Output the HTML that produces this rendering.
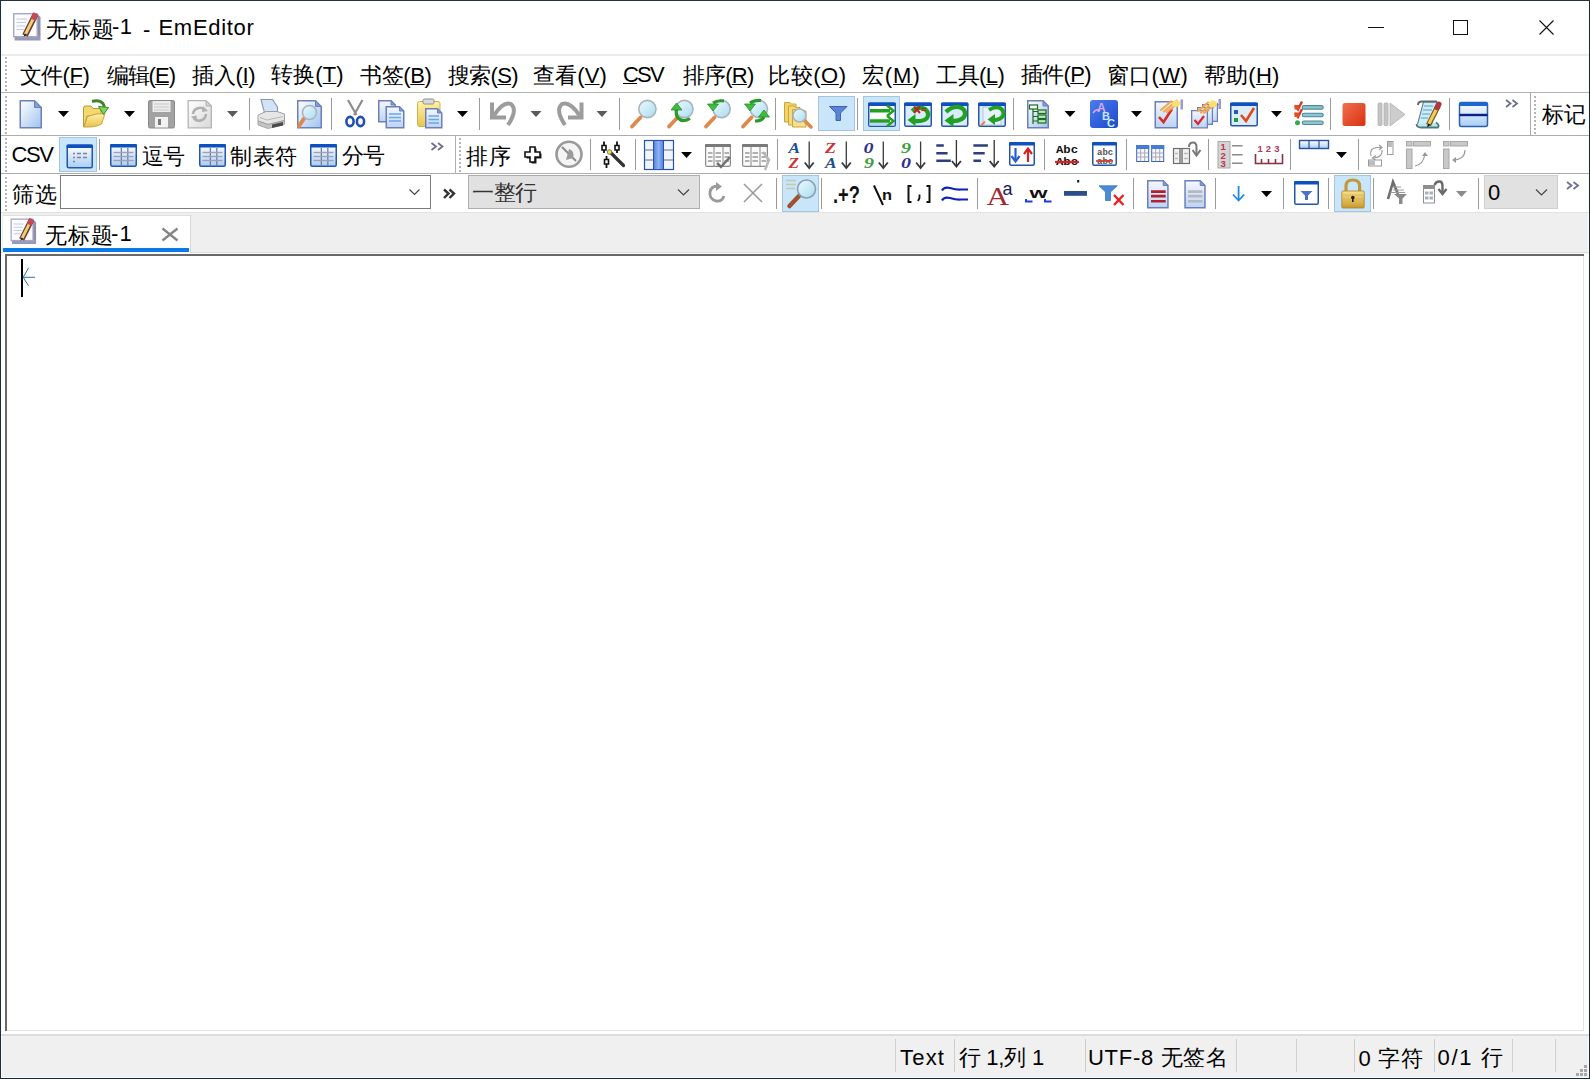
<!DOCTYPE html><html><head><meta charset="utf-8"><style>
html,body{margin:0;padding:0;}
body{width:1590px;height:1079px;position:relative;overflow:hidden;background:#fff;font-family:"Liberation Sans",sans-serif;}
body>div,body>svg{position:absolute;}
.t{white-space:nowrap;}
u{text-decoration:underline;text-underline-offset:1px;text-decoration-thickness:1px;}
</style></head><body>
<div style="left:0px;top:0px;width:1590px;height:1px;background:#27313a;"></div>
<div style="left:0px;top:0px;width:1px;height:1079px;background:#1f2f38;"></div>
<div style="left:1589px;top:0px;width:1px;height:1079px;background:#1f2a36;"></div>
<div style="left:0px;top:1078px;width:1590px;height:1px;background:#1b2836;"></div>
<div style="left:1px;top:1077px;width:1588px;height:1px;background:#f8fbff;"></div>
<div style="left:1px;top:1px;width:1px;height:1077px;background:#f6fbff;"></div>
<div style="left:1588px;top:1px;width:1px;height:1077px;background:#f8fbff;"></div>
<div style="left:1px;top:54px;width:1588px;height:2px;background:#ececec;"></div>
<div style="left:1px;top:92px;width:1588px;height:1px;background:#b3b3b3;"></div>
<div style="left:1px;top:135px;width:1588px;height:1px;background:#adadad;"></div>
<div style="left:1530px;top:93px;width:1px;height:42px;background:#a8a8a8;"></div>
<div style="left:1px;top:173px;width:1588px;height:1px;background:#adadad;"></div>
<div style="left:455px;top:136px;width:1px;height:37px;background:#b0b0b0;"></div>
<div style="left:2px;top:212px;width:1586px;height:42px;background:#efefef;"></div>
<div style="left:1px;top:212px;width:1588px;height:1px;background:#e2e2e2;"></div>
<div style="left:1px;top:252px;width:1588px;height:1px;background:#dcdcdc;"></div>
<div style="left:1px;top:253px;width:1588px;height:1px;background:#fafafa;"></div>
<div style="left:5px;top:57px;width:2px;height:2px;background:#b4b4b4;"></div>
<div style="left:5px;top:61px;width:2px;height:2px;background:#b4b4b4;"></div>
<div style="left:5px;top:65px;width:2px;height:2px;background:#b4b4b4;"></div>
<div style="left:5px;top:69px;width:2px;height:2px;background:#b4b4b4;"></div>
<div style="left:5px;top:73px;width:2px;height:2px;background:#b4b4b4;"></div>
<div style="left:5px;top:77px;width:2px;height:2px;background:#b4b4b4;"></div>
<div style="left:5px;top:81px;width:2px;height:2px;background:#b4b4b4;"></div>
<div style="left:5px;top:85px;width:2px;height:2px;background:#b4b4b4;"></div>
<div style="left:5px;top:89px;width:2px;height:2px;background:#b4b4b4;"></div>
<div style="left:5px;top:96px;width:2px;height:2px;background:#b4b4b4;"></div>
<div style="left:5px;top:100px;width:2px;height:2px;background:#b4b4b4;"></div>
<div style="left:5px;top:104px;width:2px;height:2px;background:#b4b4b4;"></div>
<div style="left:5px;top:108px;width:2px;height:2px;background:#b4b4b4;"></div>
<div style="left:5px;top:112px;width:2px;height:2px;background:#b4b4b4;"></div>
<div style="left:5px;top:116px;width:2px;height:2px;background:#b4b4b4;"></div>
<div style="left:5px;top:120px;width:2px;height:2px;background:#b4b4b4;"></div>
<div style="left:5px;top:124px;width:2px;height:2px;background:#b4b4b4;"></div>
<div style="left:5px;top:128px;width:2px;height:2px;background:#b4b4b4;"></div>
<div style="left:5px;top:132px;width:2px;height:2px;background:#b4b4b4;"></div>
<div style="left:5px;top:138px;width:2px;height:2px;background:#b4b4b4;"></div>
<div style="left:5px;top:142px;width:2px;height:2px;background:#b4b4b4;"></div>
<div style="left:5px;top:146px;width:2px;height:2px;background:#b4b4b4;"></div>
<div style="left:5px;top:150px;width:2px;height:2px;background:#b4b4b4;"></div>
<div style="left:5px;top:154px;width:2px;height:2px;background:#b4b4b4;"></div>
<div style="left:5px;top:158px;width:2px;height:2px;background:#b4b4b4;"></div>
<div style="left:5px;top:162px;width:2px;height:2px;background:#b4b4b4;"></div>
<div style="left:5px;top:166px;width:2px;height:2px;background:#b4b4b4;"></div>
<div style="left:5px;top:170px;width:2px;height:2px;background:#b4b4b4;"></div>
<div style="left:5px;top:177px;width:2px;height:2px;background:#b4b4b4;"></div>
<div style="left:5px;top:181px;width:2px;height:2px;background:#b4b4b4;"></div>
<div style="left:5px;top:185px;width:2px;height:2px;background:#b4b4b4;"></div>
<div style="left:5px;top:189px;width:2px;height:2px;background:#b4b4b4;"></div>
<div style="left:5px;top:193px;width:2px;height:2px;background:#b4b4b4;"></div>
<div style="left:5px;top:197px;width:2px;height:2px;background:#b4b4b4;"></div>
<div style="left:5px;top:201px;width:2px;height:2px;background:#b4b4b4;"></div>
<div style="left:5px;top:205px;width:2px;height:2px;background:#b4b4b4;"></div>
<div style="left:5px;top:209px;width:2px;height:2px;background:#b4b4b4;"></div>
<div style="left:1534px;top:96px;width:2px;height:2px;background:#b4b4b4;"></div>
<div style="left:1534px;top:100px;width:2px;height:2px;background:#b4b4b4;"></div>
<div style="left:1534px;top:104px;width:2px;height:2px;background:#b4b4b4;"></div>
<div style="left:1534px;top:108px;width:2px;height:2px;background:#b4b4b4;"></div>
<div style="left:1534px;top:112px;width:2px;height:2px;background:#b4b4b4;"></div>
<div style="left:1534px;top:116px;width:2px;height:2px;background:#b4b4b4;"></div>
<div style="left:1534px;top:120px;width:2px;height:2px;background:#b4b4b4;"></div>
<div style="left:1534px;top:124px;width:2px;height:2px;background:#b4b4b4;"></div>
<div style="left:1534px;top:128px;width:2px;height:2px;background:#b4b4b4;"></div>
<div style="left:1534px;top:132px;width:2px;height:2px;background:#b4b4b4;"></div>
<div style="left:459px;top:138px;width:2px;height:2px;background:#b4b4b4;"></div>
<div style="left:459px;top:142px;width:2px;height:2px;background:#b4b4b4;"></div>
<div style="left:459px;top:146px;width:2px;height:2px;background:#b4b4b4;"></div>
<div style="left:459px;top:150px;width:2px;height:2px;background:#b4b4b4;"></div>
<div style="left:459px;top:154px;width:2px;height:2px;background:#b4b4b4;"></div>
<div style="left:459px;top:158px;width:2px;height:2px;background:#b4b4b4;"></div>
<div style="left:459px;top:162px;width:2px;height:2px;background:#b4b4b4;"></div>
<div style="left:459px;top:166px;width:2px;height:2px;background:#b4b4b4;"></div>
<div style="left:459px;top:170px;width:2px;height:2px;background:#b4b4b4;"></div>
<div style="left:1368px;top:27px;width:16px;height:1px;background:#111;"></div>
<div style="left:1453px;top:20px;width:13px;height:13px;border:1px solid #111"></div>
<svg style="left:1539px;top:20px;" width="16" height="16" viewBox="0 0 16 16"><path d="M0.5 0.5L14.5 14.5M14.5 0.5L0.5 14.5" stroke="#111" stroke-width="1.1"/></svg>
<div style="left:60px;top:175px;width:369px;height:32px;border:1px solid #7a7a7a;background:#fff"></div>
<div style="left:468px;top:175px;width:230px;height:32px;border:1px solid #adadad;background:#e1e1e1"></div>
<div style="left:1484px;top:175px;width:72px;height:32px;border:1px solid #cfcfcf;background:#e1e1e1"></div>
<div style="left:3px;top:215px;width:187px;height:1px;background:#e0e0e0;"></div>
<div style="left:190px;top:215px;width:1px;height:38px;background:#d8d8d8;"></div>
<div style="left:3px;top:216px;width:187px;height:37px;background:#ffffff;"></div>
<div style="left:3px;top:248px;width:186px;height:4px;background:#0a7ae6;"></div>
<svg style="left:161px;top:227px;" width="18" height="15" viewBox="0 0 18 15"><path d="M1.5 1.5L16.5 13.5M16.5 1.5L1.5 13.5" stroke="#858585" stroke-width="2.3"/></svg>
<div style="left:5px;top:254px;width:1579px;height:777px;background:#ffffff;"></div>
<div style="left:5px;top:254px;width:1579px;height:2px;background:#696969;"></div>
<div style="left:5px;top:254px;width:2px;height:777px;background:#696969;"></div>
<div style="left:1583px;top:256px;width:1px;height:775px;background:#e3e3e3;"></div>
<div style="left:7px;top:1030px;width:1577px;height:1px;background:#e3e3e3;"></div>
<div style="left:21px;top:259px;width:2px;height:38px;background:#000;"></div>
<svg style="left:0px;top:0px;" width="40" height="300" viewBox="0 0 40 300"><path d="M28.6 267.8L23.2 277.3L28.6 285.8M23.2 277.3H35" stroke="#2f6fb8" stroke-width="1" fill="none"/></svg>
<div style="left:1px;top:1034px;width:1588px;height:2px;background:#dcdcdc;"></div>
<div style="left:2px;top:1036px;width:1586px;height:41px;background:#f0f0f0;"></div>
<div style="left:895px;top:1039px;width:1px;height:33px;background:#cfcfcf;"></div>
<div style="left:954px;top:1039px;width:1px;height:33px;background:#cfcfcf;"></div>
<div style="left:1085px;top:1039px;width:1px;height:33px;background:#cfcfcf;"></div>
<div style="left:1236px;top:1039px;width:1px;height:33px;background:#cfcfcf;"></div>
<div style="left:1296px;top:1039px;width:1px;height:33px;background:#cfcfcf;"></div>
<div style="left:1354px;top:1039px;width:1px;height:33px;background:#cfcfcf;"></div>
<div style="left:1434px;top:1039px;width:1px;height:33px;background:#cfcfcf;"></div>
<div style="left:1512px;top:1039px;width:1px;height:33px;background:#cfcfcf;"></div>
<div style="left:1555px;top:1039px;width:1px;height:33px;background:#cfcfcf;"></div>
<div style="left:1584px;top:1065px;width:3px;height:3px;background:#a8a8a8;"></div>
<div style="left:1580px;top:1069px;width:3px;height:3px;background:#a8a8a8;"></div>
<div style="left:1584px;top:1069px;width:3px;height:3px;background:#a8a8a8;"></div>
<div style="left:1576px;top:1073px;width:3px;height:3px;background:#a8a8a8;"></div>
<div style="left:1580px;top:1073px;width:3px;height:3px;background:#a8a8a8;"></div>
<div style="left:1584px;top:1073px;width:3px;height:3px;background:#a8a8a8;"></div>
<div class="t" style="left:45.50px;top:18.50px;font-size:22px;line-height:22px;letter-spacing:1.35px;color:#000">无标题</div>
<div class="t" style="left:112.00px;top:16.00px;font-size:22px;line-height:22px;letter-spacing:0.36px;color:#000">-1</div>
<div class="t" style="left:143.00px;top:19.00px;font-size:22px;line-height:22px;letter-spacing:0.00px;color:#000">-</div>
<div class="t" style="left:158.50px;top:16.50px;font-size:22px;line-height:22px;letter-spacing:0.69px;color:#000">EmEditor</div>
<div class="t" style="left:19.50px;top:65.00px;font-size:22px;line-height:22px;letter-spacing:-0.45px;color:#000">文件(<u>F</u>)</div>
<div class="t" style="left:106.50px;top:65.00px;font-size:22px;line-height:22px;letter-spacing:-0.95px;color:#000">编辑(<u>E</u>)</div>
<div class="t" style="left:192.00px;top:65.00px;font-size:22px;line-height:22px;letter-spacing:-0.31px;color:#000">插入(<u>I</u>)</div>
<div class="t" style="left:271.00px;top:64.00px;font-size:22px;line-height:22px;letter-spacing:0.13px;color:#000">转换(<u>T</u>)</div>
<div class="t" style="left:360.00px;top:65.00px;font-size:22px;line-height:22px;letter-spacing:-0.36px;color:#000">书签(<u>B</u>)</div>
<div class="t" style="left:448.00px;top:65.00px;font-size:22px;line-height:22px;letter-spacing:-0.72px;color:#000">搜索(<u>S</u>)</div>
<div class="t" style="left:533.00px;top:65.00px;font-size:22px;line-height:22px;letter-spacing:0.13px;color:#000">查看(<u>V</u>)</div>
<div class="t" style="left:623.00px;top:63.50px;font-size:22px;line-height:22px;letter-spacing:-1.80px;color:#000"><u>C</u>SV</div>
<div class="t" style="left:682.50px;top:65.00px;font-size:22px;line-height:22px;letter-spacing:-0.68px;color:#000">排序(<u>R</u>)</div>
<div class="t" style="left:768.00px;top:65.00px;font-size:22px;line-height:22px;letter-spacing:0.58px;color:#000">比较(<u>O</u>)</div>
<div class="t" style="left:861.50px;top:65.00px;font-size:22px;line-height:22px;letter-spacing:1.14px;color:#000">宏(<u>M</u>)</div>
<div class="t" style="left:936.00px;top:65.00px;font-size:22px;line-height:22px;letter-spacing:-0.50px;color:#000">工具(<u>L</u>)</div>
<div class="t" style="left:1021.00px;top:64.00px;font-size:22px;line-height:22px;letter-spacing:-0.72px;color:#000">插件(<u>P</u>)</div>
<div class="t" style="left:1106.50px;top:65.00px;font-size:22px;line-height:22px;letter-spacing:0.45px;color:#000">窗口(<u>W</u>)</div>
<div class="t" style="left:1204.00px;top:65.00px;font-size:22px;line-height:22px;letter-spacing:0.18px;color:#000">帮助(<u>H</u>)</div>
<div class="t" style="left:11.50px;top:144.00px;font-size:22px;line-height:22px;letter-spacing:-1.35px;color:#000">CSV</div>
<div class="t" style="left:141.50px;top:146.00px;font-size:22px;line-height:22px;letter-spacing:-0.18px;color:#000">逗号</div>
<div class="t" style="left:230.00px;top:146.00px;font-size:22px;line-height:22px;letter-spacing:0.72px;color:#000">制表符</div>
<div class="t" style="left:341.50px;top:145.00px;font-size:22px;line-height:22px;letter-spacing:-0.36px;color:#000">分号</div>
<div class="t" style="left:466.00px;top:146.00px;font-size:22px;line-height:22px;letter-spacing:0.54px;color:#000">排序</div>
<div class="t" style="left:11.50px;top:184.00px;font-size:22px;line-height:22px;letter-spacing:1.08px;color:#000">筛选</div>
<div class="t" style="left:472.00px;top:182.00px;font-size:22px;line-height:22px;letter-spacing:-0.27px;color:#333">一整行</div>
<div class="t" style="left:1488.00px;top:182.00px;font-size:22px;line-height:22px;letter-spacing:0.00px;color:#000">0</div>
<div class="t" style="left:1541.50px;top:104.00px;font-size:22px;line-height:22px;letter-spacing:0.00px;color:#000">标记</div>
<div class="t" style="left:44.50px;top:225.00px;font-size:22px;line-height:22px;letter-spacing:1.26px;color:#000">无标题</div>
<div class="t" style="left:111.00px;top:223.00px;font-size:22px;line-height:22px;letter-spacing:1.26px;color:#000">-1</div>
<div class="t" style="left:900.00px;top:1047.00px;font-size:22px;line-height:22px;letter-spacing:1.20px;color:#000">Text</div>
<div class="t" style="left:958.50px;top:1047.25px;font-size:22px;line-height:22px;letter-spacing:-0.18px;color:#000">行 1,列 1</div>
<div class="t" style="left:1088.00px;top:1047.25px;font-size:22px;line-height:22px;letter-spacing:0.72px;color:#000">UTF-8 无签名</div>
<div class="t" style="left:1358.50px;top:1048.25px;font-size:22px;line-height:22px;letter-spacing:0.78px;color:#000">0 字符</div>
<div class="t" style="left:1437.50px;top:1047.25px;font-size:22px;line-height:22px;letter-spacing:1.71px;color:#000">0/1 行</div>
<svg style="left:0;top:0;position:absolute" width="1590" height="1079" viewBox="0 0 1590 1079"><defs>
<linearGradient id="gdoc" x1="0" y1="0" x2="1" y2="1"><stop offset="0" stop-color="#ffffff"/><stop offset="1" stop-color="#9fc3f0"/></linearGradient>
<linearGradient id="gdoc2" x1="0" y1="0" x2="0" y2="1"><stop offset="0" stop-color="#f4f8ff"/><stop offset="1" stop-color="#bcd3f3"/></linearGradient>
<linearGradient id="gfr" x1="0" y1="0" x2="0" y2="1"><stop offset="0" stop-color="#ffffff"/><stop offset="1" stop-color="#a9cdf5"/></linearGradient>
<linearGradient id="gfold" x1="0" y1="0" x2="0" y2="1"><stop offset="0" stop-color="#fff1a8"/><stop offset="1" stop-color="#e9c44c"/></linearGradient>
<linearGradient id="ggray" x1="0" y1="0" x2="1" y2="1"><stop offset="0" stop-color="#ffffff"/><stop offset="1" stop-color="#d8d8d8"/></linearGradient>
<linearGradient id="glens" x1="0" y1="0" x2="1" y2="1"><stop offset="0" stop-color="#eefaff"/><stop offset="1" stop-color="#a8dcf0"/></linearGradient>
<linearGradient id="gred" x1="0" y1="0" x2="1" y2="1"><stop offset="0" stop-color="#f07050"/><stop offset="1" stop-color="#d83010"/></linearGradient>
<linearGradient id="ggold" x1="0" y1="0" x2="0" y2="1"><stop offset="0" stop-color="#f8e08a"/><stop offset="1" stop-color="#c89a30"/></linearGradient>
<linearGradient id="gabc" x1="0" y1="0" x2="1" y2="1"><stop offset="0" stop-color="#4a7cf0"/><stop offset="1" stop-color="#1e48c8"/></linearGradient>
<linearGradient id="gcol" x1="0" y1="0" x2="1" y2="0"><stop offset="0" stop-color="#4f80e0"/><stop offset="0.5" stop-color="#8fb4f4"/><stop offset="1" stop-color="#4f80e0"/></linearGradient>
<linearGradient id="gbtn" x1="0" y1="0" x2="0" y2="1"><stop offset="0" stop-color="#d4e9fb"/><stop offset="1" stop-color="#c6e1f8"/></linearGradient>
</defs><rect x="249" y="98" width="1" height="32" fill="#9a9a9a"/><rect x="331" y="98" width="1" height="32" fill="#9a9a9a"/><rect x="479" y="98" width="1" height="32" fill="#9a9a9a"/><rect x="619" y="98" width="1" height="32" fill="#9a9a9a"/><rect x="775" y="98" width="1" height="32" fill="#9a9a9a"/><rect x="857" y="98" width="1" height="32" fill="#9a9a9a"/><rect x="1013" y="98" width="1" height="32" fill="#9a9a9a"/><rect x="1330" y="98" width="1" height="32" fill="#9a9a9a"/><rect x="1449" y="98" width="1" height="32" fill="#9a9a9a"/><path d="M20.25 100.75H34.5L41.25 107.5V127.75H20.25Z" fill="url(#gdoc)" stroke="#6c7fb8" stroke-width="1.5"/><path d="M34.5 100.75V107.5H41.25Z" fill="#7f9fd8" stroke="#6c7fb8" stroke-width="1"/><path d="M58 111H69L63.5 117Z" fill="#000"/><path d="M83.5 127V108Q83.5 106 85.5 106H91L93 108.5H101V116H87L84 127Z" fill="#f3d870" stroke="#b89838" stroke-width="1"/><path d="M84 127L87.5 116.5Q96 113 105 113.5L101.5 124Q96 127.5 84 127Z" fill="url(#gfold)" stroke="#c9a53a" stroke-width="1"/><path d="M92 101.5Q99 99.5 103 103.5L104.5 107" stroke="#3a8a2a" stroke-width="3" fill="none"/><path d="M98.5 106.5L108.5 107.5L103.5 114.5Z" fill="#7ad85a" stroke="#3a8a2a" stroke-width="1"/><path d="M124 111H135L129.5 117Z" fill="#000"/><rect x="148.5" y="100.5" width="26" height="27.5" rx="1.5" fill="#a2a2a2" stroke="#8a8a8a" stroke-width="1"/><rect x="152.5" y="101" width="18" height="11" fill="#ececec"/><path d="M154 104H169M154 107H169M154 110H169" stroke="#c8c8c8" stroke-width="1"/><rect x="155" y="117" width="13" height="10.5" fill="#f2f2f2"/><rect x="158" y="119" width="3" height="6" fill="#7a7a7a"/><path d="M188.15 100.65H206L211.35 106V127.85H188.15Z" fill="url(#ggray)" stroke="#b4b4b4" stroke-width="1.3"/><path d="M206 100.65V106H211.35Z" fill="#d0d0d0" stroke="#b4b4b4" stroke-width="1"/><path d="M193 114A7 7 0 0 1 205 110" fill="none" stroke="#b0b0b0" stroke-width="2.6"/><path d="M206 114A7 7 0 0 1 194 118.5" fill="none" stroke="#b0b0b0" stroke-width="2.6"/><path d="M203 106L208 111L202 112Z M196 121.5L191 116.5L197 115.5Z" fill="#b0b0b0"/><path d="M227 111H238L232.5 117Z" fill="#5a5a5a"/><path d="M261 99.5H272.5L277.5 107V113H264.5Z" fill="#d2e3f8" stroke="#8a92b4" stroke-width="1.1"/><path d="M258 115L266 111.5H277L284.5 114V120.5L268 124.5L258 121Z" fill="#e6e6e6" stroke="#a0a0a0" stroke-width="1"/><path d="M258 121L268 124.5L284.5 120.5V124.5L268 128.5L258 125Z" fill="#c4c4c4" stroke="#9a9a9a" stroke-width="0.8"/><path d="M272 124.5L283 122V125.5L272 128Z" fill="#4a4a4a"/><path d="M260 117.5L267 120L283 116.5" stroke="#b8b8b8" stroke-width="1" fill="none"/><path d="M297.75 100.75H315.5L321.25 106.5V127.75H297.75Z" fill="url(#gdoc)" stroke="#6c7fb8" stroke-width="1.5"/><path d="M315.5 100.75V106.5H321.25Z" fill="#7f9fd8" stroke="#6c7fb8" stroke-width="1"/><path d="M304 118.5L299 126" stroke="#e0874a" stroke-width="4" stroke-linecap="round"/><circle cx="309.5" cy="112.5" r="7" fill="url(#glens)" stroke="#a9b4bf" stroke-width="1.6"/><path d="M348 100L356.5 115M362.5 100L354 115" stroke="#8d8d8d" stroke-width="2.2"/><ellipse cx="350" cy="121.5" rx="3.6" ry="4.6" fill="none" stroke="#1f4fb0" stroke-width="2.6"/><ellipse cx="360.5" cy="121.5" rx="3.6" ry="4.6" fill="none" stroke="#1f4fb0" stroke-width="2.6"/><path d="M378.75 100.75H391L395.25 105V121.75H378.75Z" fill="url(#gdoc2)" stroke="#6c7fb8" stroke-width="1.5"/><path d="M391 100.75V105H395.25Z" fill="#7f9fd8" stroke="#6c7fb8" stroke-width="1"/><path d="M386.25 106.75H399.5L403.75 111V127.75H386.25Z" fill="url(#gdoc2)" stroke="#6c7fb8" stroke-width="1.5"/><path d="M399.5 106.75V111H403.75Z" fill="#7f9fd8" stroke="#6c7fb8" stroke-width="1"/><path d="M389 114H401M389 117.5H401M389 121H401" stroke="#6aa7e8" stroke-width="1.6"/><rect x="417.5" y="101.5" width="22.5" height="25" rx="2" fill="url(#gfold)" stroke="#c9b255" stroke-width="1"/><rect x="423" y="99" width="11" height="5" rx="1.5" fill="#d9d9d9" stroke="#8e8e8e" stroke-width="1"/><path d="M425.75 108.75H437.5L441.75 113V127.75H425.75Z" fill="url(#gdoc2)" stroke="#6c7fb8" stroke-width="1.5"/><path d="M437.5 108.75V113H441.75Z" fill="#7f9fd8" stroke="#6c7fb8" stroke-width="1"/><path d="M428.5 116H439M428.5 119.5H439M428.5 123H439" stroke="#6aa7e8" stroke-width="1.6"/><path d="M457 111H468L462.5 117Z" fill="#000"/><path d="M492 102.5V117.5H506" fill="none" stroke="#9c9c9c" stroke-width="4"/><path d="M494 115.5Q503 101 511 104Q518 110 508 125" fill="none" stroke="#9c9c9c" stroke-width="4"/><path d="M530.5 111H541.5L536.0 117Z" fill="#5a5a5a"/><path d="M581.5 102.5V117.5H568" fill="none" stroke="#9c9c9c" stroke-width="4"/><path d="M579.5 115.5Q570 101 562 104Q555 110 565 125" fill="none" stroke="#9c9c9c" stroke-width="4"/><path d="M596.5 111H607.5L602.0 117Z" fill="#5a5a5a"/><path d="M640.5 117.5L632 126.5" stroke="#e0874a" stroke-width="3.8" stroke-linecap="round"/><circle cx="647.4" cy="109" r="8.6" fill="url(#glens)" stroke="#a9b4bf" stroke-width="1.6"/><path d="M677.5 117.5L669 126.5" stroke="#e0874a" stroke-width="3.8" stroke-linecap="round"/><circle cx="684.4" cy="109" r="8.6" fill="url(#glens)" stroke="#a9b4bf" stroke-width="1.6"/><path d="M677 108Q675 114 678 118Q683 123 690 118.5" stroke="#2a9a2a" stroke-width="3.2" fill="none"/><path d="M671 110L682 110L676.5 103Z" fill="#3cc03c" stroke="#2a8a2a" stroke-width="0.8"/><path d="M714.5 117.5L706 126.5" stroke="#e0874a" stroke-width="3.8" stroke-linecap="round"/><circle cx="721.6" cy="109" r="8.6" fill="url(#glens)" stroke="#a9b4bf" stroke-width="1.6"/><path d="M713 103Q717 100 724 101" stroke="#2a9a2a" stroke-width="3.2" fill="none"/><path d="M707.5 104L718.5 104L713 111Z" fill="#3cc03c" stroke="#2a8a2a" stroke-width="0.8"/><path d="M751.5 117.5L743 126.5" stroke="#e0874a" stroke-width="3.8" stroke-linecap="round"/><circle cx="758.9" cy="109" r="8.6" fill="url(#glens)" stroke="#a9b4bf" stroke-width="1.6"/><path d="M750 103Q754 100 761 100.5" stroke="#2a9a2a" stroke-width="3.2" fill="none"/><path d="M744.5 104L755.5 104L750 111Z" fill="#3cc03c" stroke="#2a8a2a" stroke-width="0.8"/><path d="M764 117Q762 121 755 121" stroke="#2a9a2a" stroke-width="3.2" fill="none"/><path d="M758.5 117L769.5 117L764 110Z" fill="#3cc03c" stroke="#2a8a2a" stroke-width="0.8"/><path d="M784.5 102.5H790L791.5 104H796V122H784.5Z" fill="#f0d36a" stroke="#c9a53a" stroke-width="1"/><path d="M788.5 106H794L795.5 107.5H800V125H788.5Z" fill="#f3da7a" stroke="#c9a53a" stroke-width="1"/><path d="M792.5 109.5H798L799.5 111H806V127H792.5Z" fill="#f6e08a" stroke="#c9a53a" stroke-width="1"/><path d="M804 120L811 127" stroke="#e0874a" stroke-width="3.5" stroke-linecap="round"/><circle cx="799.5" cy="115.5" r="6.5" fill="url(#glens)" stroke="#a9b4bf" stroke-width="1.6"/><rect x="818.5" y="96.5" width="36" height="34" fill="#c9e5f9" stroke="#a3c6de" stroke-width="1"/><path d="M829.5 106.5H847L840.5 113V120.5H836V113Z" fill="#5c84d6" stroke="#3f63b0" stroke-width="1"/><rect x="863.5" y="96.5" width="36" height="34" fill="#c9e5f9" stroke="#a3c6de" stroke-width="1"/><rect x="868.75" y="103.25" width="26.5" height="23.0" rx="1.5" fill="#ffffff" stroke="#2456a8" stroke-width="1.5"/><rect x="868" y="102.5" width="28" height="3.5" rx="1.2" fill="#0f50c0"/><rect x="869.5" y="123" width="25" height="2.5" fill="#b8d8f8"/><path d="M870 110.8H890M870 121H890" stroke="#22a022" stroke-width="3.6"/><path d="M887 105.5L893.5 110.8L887 116M887 115.7L893.5 121L887 126.3" stroke="#22a022" stroke-width="2.4" fill="none"/><rect x="904.75" y="103.25" width="26.5" height="23.0" rx="1.5" fill="#d9ecfb" stroke="#2456a8" stroke-width="1.5"/><rect x="904" y="102.5" width="28" height="3.5" rx="1.2" fill="#0f50c0"/><path d="M912 111Q918 106 925 109Q930 113 927 118Q923 122 914 121" fill="none" stroke="#22a022" stroke-width="4.2"/><path d="M907.5 120L915.5 114V126Z" fill="#22a022"/><path d="M914 106.5L920 113M920 106.5L914 113" stroke="#c02020" stroke-width="2"/><path d="M921.5 108.5H926M921.5 110.5H926" stroke="#c02020" stroke-width="1"/><rect x="941.75" y="103.25" width="26.0" height="23.0" rx="1.5" fill="#d9ecfb" stroke="#2456a8" stroke-width="1.5"/><rect x="941" y="102.5" width="27.5" height="3.5" rx="1.2" fill="#0f50c0"/><path d="M946 112Q952 106 959 107Q966 109 965 115Q963 121 953 121" fill="none" stroke="#22a022" stroke-width="4.4"/><path d="M944.5 120.5L953.5 114V127Z" fill="#22a022"/><rect x="978.75" y="103.25" width="26.5" height="23.0" rx="1.5" fill="#d9ecfb" stroke="#2456a8" stroke-width="1.5"/><rect x="978" y="102.5" width="28" height="3.5" rx="1.2" fill="#0f50c0"/><rect x="983" y="107" width="18" height="18" fill="#e8f2fc" stroke="#a8bcd8" stroke-width="0.8"/><path d="M989 110Q995 106 1000 108Q1005 111 1003 116Q1000 120 994 120" fill="none" stroke="#22a022" stroke-width="3.8"/><path d="M987.5 119.5L995 114V125Z" fill="#22a022"/><path d="M981 125.5L985 121.5" stroke="#e0874a" stroke-width="2"/><path d="M1027.75 100.75H1043L1048.25 106V127.75H1027.75Z" fill="url(#gdoc)" stroke="#6c7fb8" stroke-width="1.5"/><path d="M1043 100.75V106H1048.25Z" fill="#7f9fd8" stroke="#6c7fb8" stroke-width="1"/><rect x="1029.5" y="105" width="8" height="4" fill="#fff" stroke="#1c6a1c" stroke-width="1.2"/><path d="M1033 109V124M1033 111.5H1038M1033 116.5H1038M1033 121H1038" stroke="#1c6a1c" stroke-width="1.2"/><rect x="1038" y="110" width="8" height="3.5" fill="#bfe8bf" stroke="#1c6a1c" stroke-width="1.2"/><rect x="1038" y="115" width="8" height="3.5" fill="#bfe8bf" stroke="#1c6a1c" stroke-width="1.2"/><rect x="1038" y="119.5" width="8" height="3.5" fill="#bfe8bf" stroke="#1c6a1c" stroke-width="1.2"/><path d="M1064.5 111H1075.5L1070.0 117Z" fill="#000"/><rect x="1090" y="100" width="28" height="28" rx="3" fill="url(#gabc)"/><text x="1097" y="112" font-family="Liberation Sans" font-size="12" fill="#d8a8e8" font-weight="bold">A</text><text x="1102" y="120" font-family="Liberation Sans" font-size="11" fill="#c8e4ff" font-weight="bold">B</text><text x="1107" y="127" font-family="Liberation Sans" font-size="11" fill="#c8f0ff" font-weight="bold">C</text><path d="M1093 113Q1096 108 1100 111" stroke="#e0a8e0" stroke-width="1.5" fill="none"/><path d="M1131 111H1142L1136.5 117Z" fill="#000"/><path d="M1155.25 101.75H1178L1177.25 101V127.75H1155.25Z" fill="url(#gdoc2)" stroke="#6c7fb8" stroke-width="1.5"/><path d="M1178 101.75V101H1177.25Z" fill="#7f9fd8" stroke="#6c7fb8" stroke-width="1"/><path d="M1159 117L1163.5 122L1172 109" stroke="#d82a2a" stroke-width="2.6" fill="none"/><path d="M1161 110L1171 101.5M1164 111.5L1174 103M1167 112L1177 104" stroke="#f0a850" stroke-width="2.2" stroke-linecap="round"/><ellipse cx="1176" cy="103.5" rx="4" ry="3.5" fill="#f8e070"/><rect x="1180.5" y="99.5" width="2.5" height="10" fill="#9a9ad0"/><path d="M1202.6 104.6H1218L1217.4 104V121.4H1202.6Z" fill="url(#gdoc2)" stroke="#6c7fb8" stroke-width="1.2"/><path d="M1218 104.6V104H1217.4Z" fill="#7f9fd8" stroke="#6c7fb8" stroke-width="1"/><path d="M1197.6 107.6H1213L1212.4 107V124.4H1197.6Z" fill="url(#gdoc2)" stroke="#6c7fb8" stroke-width="1.2"/><path d="M1213 107.6V107H1212.4Z" fill="#7f9fd8" stroke="#6c7fb8" stroke-width="1"/><path d="M1191.65 110.65H1208L1207.35 110V127.85H1191.65Z" fill="url(#gdoc2)" stroke="#6c7fb8" stroke-width="1.3"/><path d="M1208 110.65V110H1207.35Z" fill="#7f9fd8" stroke="#6c7fb8" stroke-width="1"/><path d="M1194.5 120L1198 124L1204 116" stroke="#d82a2a" stroke-width="2.2" fill="none"/><path d="M1198 111L1208 102.5M1201 112.5L1211 104M1204 113L1214 105" stroke="#f0a850" stroke-width="2.2" stroke-linecap="round"/><ellipse cx="1213" cy="104" rx="4" ry="3.5" fill="#f8e070"/><rect x="1218.5" y="99" width="2.5" height="10" fill="#9a9ad0"/><rect x="1230.75" y="103.25" width="26.5" height="22.5" rx="1.5" fill="#dcecfa" stroke="#2456a8" stroke-width="1.5"/><rect x="1230" y="102.5" width="28" height="3.5" rx="1.2" fill="#0f50c0"/><rect x="1234" y="110" width="4" height="4" fill="#1c5cc8"/><rect x="1234" y="118" width="4" height="4" fill="#1c9a3c"/><path d="M1241 115L1246 121L1254 108" stroke="#e04a1a" stroke-width="2.6" fill="none"/><path d="M1271 111H1282L1276.5 117Z" fill="#000"/><path d="M1304 107.4H1321.5M1304 115H1321.5M1304 122.8H1321.5" stroke="#4f8a98" stroke-width="4.6" stroke-linecap="round"/><path d="M1304 107.4H1321.5M1304 115H1321.5M1304 122.8H1321.5" stroke="#8cc8d4" stroke-width="2.4" stroke-linecap="round"/><path d="M1295 105.5L1298 109.5L1302 101.5M1295 113L1298 117L1302 109" stroke="#d83a2a" stroke-width="2.4" fill="none"/><rect x="1294.5" y="105" width="4.5" height="4.5" fill="#e05020"/><rect x="1294.5" y="112.5" width="4.5" height="4.5" fill="#e05020"/><circle cx="1297.5" cy="122.8" r="2.5" fill="#3aa84a"/><rect x="1342.5" y="103" width="23" height="23" rx="2.5" fill="url(#gred)"/><rect x="1378" y="103" width="4" height="22.5" rx="1" fill="#c4c4c4" stroke="#b0b0b0" stroke-width="0.8"/><rect x="1384" y="103" width="4" height="22.5" rx="1" fill="#c4c4c4" stroke="#b0b0b0" stroke-width="0.8"/><path d="M1390 103L1405 114.5L1390 126Z" fill="#cdcdcd" stroke="#b0b0b0" stroke-width="0.8"/><path d="M1423.5 102H1437L1431 126H1417Z" fill="#cdeef8" stroke="#5f7f88" stroke-width="1.1"/><path d="M1418 105Q1418 101 1423 101.5H1437" stroke="#5a6a70" stroke-width="2" fill="none"/><path d="M1416.5 124Q1417 128 1422 127.5H1438Q1440 125 1436 122.5" stroke="#4a7a80" stroke-width="1.8" fill="#bfe6ef"/><path d="M1424 106H1433M1423 110H1432M1422 114H1430M1421 118H1428" stroke="#80b8d8" stroke-width="1.3"/><path d="M1428.5 125L1438 106" stroke="#7a5a20" stroke-width="5.5"/><path d="M1428.8 124L1437.8 106.5" stroke="#f2cf58" stroke-width="3"/><path d="M1437.2 107.5L1438.8 104.3" stroke="#b03840" stroke-width="5.5" stroke-linecap="round"/><path d="M1427 127.5L1428 123.5L1430.5 124.8Z" fill="#111"/><rect x="1459.5" y="102.5" width="28" height="24" rx="2" fill="url(#gfr)" stroke="#2b5fb0" stroke-width="1.5"/><rect x="1459" y="102.3" width="29" height="3.8" rx="1.5" fill="#1a68d0"/><rect x="1459.5" y="113.8" width="28" height="2.4" fill="#0c1e8a"/><path d="M1506 100L1510.5 103.5L1506 107M1512.5 100L1517 103.5L1512.5 107" stroke="#6e6e8e" stroke-width="1.8" fill="none"/><rect x="99" y="139" width="1" height="31" fill="#9a9a9a"/><rect x="590" y="139" width="1" height="31" fill="#9a9a9a"/><rect x="635" y="139" width="1" height="31" fill="#9a9a9a"/><rect x="777" y="139" width="1" height="31" fill="#9a9a9a"/><rect x="1044" y="139" width="1" height="31" fill="#9a9a9a"/><rect x="1126" y="139" width="1" height="31" fill="#9a9a9a"/><rect x="1208" y="139" width="1" height="31" fill="#9a9a9a"/><rect x="1290" y="139" width="1" height="31" fill="#9a9a9a"/><rect x="1358" y="139" width="1" height="31" fill="#9a9a9a"/><rect x="59.5" y="137.5" width="37" height="34" fill="#c9e5f9" stroke="#a3c6de" stroke-width="1"/><rect x="67.25" y="145.25" width="25.0" height="22.5" rx="1.5" fill="url(#gfr)" stroke="#2456a8" stroke-width="1.5"/><rect x="66.5" y="144.5" width="26.5" height="3.5" rx="1.2" fill="#0f50c0"/><path d="M73 153.5H75M77 153.5H81M83 153.5H87M73 157.5H75M77 157.5H81M83 157.5H87M73 161.5H75" stroke="#8080a0" stroke-width="1.6"/><rect x="110.75" y="144.75" width="25.5" height="21.5" rx="1.5" fill="url(#gfr)" stroke="#2456a8" stroke-width="1.5"/><rect x="110" y="144" width="27" height="3.5" rx="1.2" fill="#0f50c0"/><path d="M121.34 148V165.5M127.82 148V165.5" stroke="#6a7a9a" stroke-width="1.2"/><path d="M113.5 152.5H133.5" stroke="#a0a0b8" stroke-width="1.4"/><path d="M113.5 156.5H133.5" stroke="#a0a0b8" stroke-width="1.4"/><path d="M113.5 160.5H133.5" stroke="#a0a0b8" stroke-width="1.4"/><rect x="199.75" y="144.75" width="25.5" height="21.5" rx="1.5" fill="url(#gfr)" stroke="#2456a8" stroke-width="1.5"/><rect x="199" y="144" width="27" height="3.5" rx="1.2" fill="#0f50c0"/><path d="M210.34 148V165.5M216.82 148V165.5" stroke="#6a7a9a" stroke-width="1.2"/><path d="M202.5 152.5H222.5" stroke="#a0a0b8" stroke-width="1.4"/><path d="M202.5 156.5H222.5" stroke="#a0a0b8" stroke-width="1.4"/><path d="M202.5 160.5H222.5" stroke="#a0a0b8" stroke-width="1.4"/><rect x="310.75" y="144.75" width="25.5" height="21.5" rx="1.5" fill="url(#gfr)" stroke="#2456a8" stroke-width="1.5"/><rect x="310" y="144" width="27" height="3.5" rx="1.2" fill="#0f50c0"/><path d="M321.34 148V165.5M327.82 148V165.5" stroke="#6a7a9a" stroke-width="1.2"/><path d="M313.5 152.5H333.5" stroke="#a0a0b8" stroke-width="1.4"/><path d="M313.5 156.5H333.5" stroke="#a0a0b8" stroke-width="1.4"/><path d="M313.5 160.5H333.5" stroke="#a0a0b8" stroke-width="1.4"/><path d="M431.5 143L436 146.5L431.5 150M438 143L442.5 146.5L438 150" stroke="#6e6e8e" stroke-width="1.8" fill="none"/><path d="M530 147H535V152H540V157H535V162H530V157H525V152H530Z" fill="#222" transform="translate(1.5,1.5)"/><path d="M530 147H535V152H540V157H535V162H530V157H525V152H530Z" fill="#fff" stroke="#111" stroke-width="1.6"/><circle cx="569" cy="154.3" r="12.5" fill="#f4f4f4" stroke="#9a9a9a" stroke-width="2.6"/><path d="M562 147L576 161" stroke="#8a8a8a" stroke-width="2"/><path d="M569 149Q575 151 573 158L566 160Z" fill="#9a9a9a"/><path d="M604 141.5V153M617 141.5V153M606.5 156V168" stroke="#111" stroke-width="1.8"/><path d="M602 145.5H606V150H602Z M615 145.5H619V150H615Z M604.5 159.5H608.5V164H604.5Z" fill="#fff" stroke="#111" stroke-width="1.6"/><path d="M609.5 151.5L623.5 165.5" stroke="#333" stroke-width="3.2" stroke-linecap="round"/><circle cx="609.5" cy="152" r="2.3" fill="#f0e040" stroke="#666" stroke-width="0.8"/><rect x="644.5" y="140.5" width="29" height="29" fill="#eef5ff" stroke="#2a50a8" stroke-width="1.2"/><rect x="653.5" y="141" width="10" height="28" fill="url(#gcol)"/><path d="M653.5 141V169M663.5 141V169" stroke="#2a50a8" stroke-width="1"/><path d="M645 150H653M664 150H673M645 160H653M664 160H673" stroke="#9a9a9a" stroke-width="1.4"/><path d="M681 152H692L686.5 158Z" fill="#000"/><rect x="705.6" y="144.6" width="24.8" height="21.8" rx="1.5" fill="#fafafa" stroke="#8a8a8a" stroke-width="1.2"/><rect x="705" y="144" width="26" height="3" rx="1" fill="#7a7a7a"/><path d="M714 147V167M723 147V167" stroke="#8a8a8a" stroke-width="1"/><path d="M708 153H712.5M715.5 153H721M724.5 153H729" stroke="#b0b0b0" stroke-width="2"/><path d="M708 157H712.5M715.5 157H721M724.5 157H729" stroke="#b0b0b0" stroke-width="2"/><path d="M708 161H712.5M715.5 161H721M724.5 161H729" stroke="#b0b0b0" stroke-width="2"/><path d="M717 163L721 167L730 157" stroke="#707070" stroke-width="2.5" fill="none"/><rect x="742.6" y="144.6" width="24.8" height="21.8" rx="1.5" fill="#fafafa" stroke="#8a8a8a" stroke-width="1.2"/><rect x="742" y="144" width="26" height="3" rx="1" fill="#7a7a7a"/><path d="M751 147V167M760 147V167" stroke="#8a8a8a" stroke-width="1"/><path d="M745 153H749.5M752.5 153H758M761.5 153H766" stroke="#b0b0b0" stroke-width="2"/><path d="M745 157H749.5M752.5 157H758M761.5 157H766" stroke="#b0b0b0" stroke-width="2"/><path d="M745 161H749.5M752.5 161H758M761.5 161H766" stroke="#b0b0b0" stroke-width="2"/><path d="M763 152L769 160L765 170" stroke="#b8b8b8" stroke-width="2.5" fill="none"/><text x="788.5" y="152.8" font-family="Liberation Serif" font-size="15" font-weight="bold" font-style="italic" fill="#1f4f8f" textLength="11.5" lengthAdjust="spacingAndGlyphs">A</text><text x="788.5" y="168.3" font-family="Liberation Serif" font-size="15" font-weight="bold" font-style="italic" fill="#d03030" textLength="10.5" lengthAdjust="spacingAndGlyphs">Z</text><path d="M809.2 141.5V167" stroke="#3a3a3a" stroke-width="1.3"/><path d="M804.7 162.5L809.2 168L813.7 162.5" stroke="#3a3a3a" stroke-width="1.8" fill="none"/><text x="825" y="153.3" font-family="Liberation Serif" font-size="15" font-weight="bold" font-style="italic" fill="#d03030" textLength="11" lengthAdjust="spacingAndGlyphs">Z</text><text x="825" y="168.3" font-family="Liberation Serif" font-size="15" font-weight="bold" font-style="italic" fill="#1f4f8f" textLength="11.5" lengthAdjust="spacingAndGlyphs">A</text><path d="M846.3 141.5V167" stroke="#3a3a3a" stroke-width="1.3"/><path d="M841.8 162.5L846.3 168L850.8 162.5" stroke="#3a3a3a" stroke-width="1.8" fill="none"/><text x="863.5" y="153.3" font-family="Liberation Serif" font-size="15" font-weight="bold" font-style="italic" fill="#303090" textLength="10" lengthAdjust="spacingAndGlyphs">0</text><text x="864" y="168.3" font-family="Liberation Serif" font-size="15" font-weight="bold" font-style="italic" fill="#3aa03a" textLength="10" lengthAdjust="spacingAndGlyphs">9</text><path d="M883.3 141.5V167" stroke="#3a3a3a" stroke-width="1.3"/><path d="M878.8 162.5L883.3 168L887.8 162.5" stroke="#3a3a3a" stroke-width="1.8" fill="none"/><text x="901" y="153.3" font-family="Liberation Serif" font-size="15" font-weight="bold" font-style="italic" fill="#3aa03a" textLength="10" lengthAdjust="spacingAndGlyphs">9</text><text x="901" y="168.3" font-family="Liberation Serif" font-size="15" font-weight="bold" font-style="italic" fill="#303090" textLength="10" lengthAdjust="spacingAndGlyphs">0</text><path d="M920.6 141.5V167" stroke="#3a3a3a" stroke-width="1.3"/><path d="M916.1 162.5L920.6 168L925.1 162.5" stroke="#3a3a3a" stroke-width="1.8" fill="none"/><path d="M936.3 145.5H943.8M936.3 153.2H947.6M936.3 160.8H950.8" stroke="#2c3f7a" stroke-width="2.6"/><path d="M956.4 140V165.5" stroke="#333" stroke-width="1.3"/><path d="M951.9 161.0L956.4 166.5L960.9 161.0" stroke="#333" stroke-width="1.8" fill="none"/><path d="M973.4 145.5H987.9M973.4 153.2H984.7M973.4 160.8H981" stroke="#2c3f7a" stroke-width="2.6"/><path d="M994.2 140V165.5" stroke="#333" stroke-width="1.3"/><path d="M989.7 161.0L994.2 166.5L998.7 161.0" stroke="#333" stroke-width="1.8" fill="none"/><rect x="1009.75" y="142.75" width="24.5" height="22.5" rx="1.5" fill="#ffffff" stroke="#2456a8" stroke-width="1.5"/><rect x="1009" y="142" width="26" height="3.5" rx="1.2" fill="#0f50c0"/><path d="M1015.5 148V161" stroke="#2a5ad0" stroke-width="2.2"/><path d="M1011.5 156L1015.5 161.5L1019.5 156" stroke="#2a5ad0" stroke-width="2.2" fill="none"/><path d="M1028 162V149" stroke="#d82020" stroke-width="2.2"/><path d="M1024 154L1028 148.5L1032 154" stroke="#d82020" stroke-width="2.2" fill="none"/><text x="1056" y="152.5" font-family="Liberation Mono" font-size="11.5" font-weight="bold" fill="#111" textLength="22" lengthAdjust="spacingAndGlyphs">Abc</text><text x="1056" y="165" font-family="Liberation Mono" font-size="11.5" font-weight="bold" fill="#111" textLength="22" lengthAdjust="spacingAndGlyphs">Abc</text><path d="M1055 162H1079" stroke="#e02020" stroke-width="2.2"/><rect x="1092.75" y="142.75" width="23.5" height="22.5" rx="1.5" fill="#ffffff" stroke="#2456a8" stroke-width="1.5"/><rect x="1092" y="142" width="25" height="3.5" rx="1.2" fill="#0f50c0"/><text x="1097" y="155" font-family="Liberation Mono" font-size="9" font-weight="bold" fill="#555">abc</text><text x="1097" y="163.5" font-family="Liberation Mono" font-size="9" font-weight="bold" fill="#555">abc</text><path d="M1096 161H1113" stroke="#d03020" stroke-width="1.6"/><rect x="1136.7" y="145.5" width="12" height="16" fill="#f6f8fc" stroke="#3a64b8" stroke-width="1"/><rect x="1136.2" y="145" width="13" height="4" fill="#4a7ad8"/><path d="M1137.2 153H1148.2M1137.2 157H1148.2M1140.7 149V161M1144.7 149V161" stroke="#a8a8b8" stroke-width="1"/><rect x="1151.7" y="145.5" width="12" height="16" fill="#f6f8fc" stroke="#3a64b8" stroke-width="1"/><rect x="1151.2" y="145" width="13" height="4" fill="#4a7ad8"/><path d="M1152.2 153H1163.2M1152.2 157H1163.2M1155.7 149V161M1159.7 149V161" stroke="#a8a8b8" stroke-width="1"/><rect x="1173.5" y="148.5" width="16" height="15" fill="#f0f0f0" stroke="#6e6e6e" stroke-width="1.2"/><rect x="1179" y="149" width="4" height="14" fill="#9a9a9a"/><path d="M1175 153.5H1178M1184 153.5H1188M1175 158.5H1178M1184 158.5H1188" stroke="#bbb" stroke-width="1.5"/><path d="M1189 147Q1189 142.5 1193 142.5Q1196.5 142.5 1196.5 147V154" stroke="#777" stroke-width="2" fill="none"/><path d="M1192.5 150L1196.5 155.5L1200.5 150" stroke="#777" stroke-width="2" fill="none"/><rect x="1218" y="141.5" width="12" height="26.5" fill="#d4d4d4" stroke="#a8a8a8" stroke-width="1"/><text x="1220.5" y="150" font-family="Liberation Sans" font-size="9.5" font-weight="bold" fill="#c03050">1</text><text x="1220.5" y="158.5" font-family="Liberation Sans" font-size="9.5" font-weight="bold" fill="#c03050">2</text><text x="1220.5" y="167" font-family="Liberation Sans" font-size="9.5" font-weight="bold" fill="#c03050">3</text><path d="M1232 145.7H1242.6M1232 154.8H1242.6M1232 163.3H1242.6" stroke="#8a8a8a" stroke-width="1.6"/><text x="1257.5" y="152" font-family="Liberation Sans" font-size="9.5" font-weight="bold" fill="#b03858" textLength="22" lengthAdjust="spacing">1 2 3</text><path d="M1255.5 154V163.5H1282.5V154M1261.5 159V163.5M1268.5 159V163.5M1275.5 159V163.5" stroke="#8a3040" stroke-width="1.6" fill="none"/><rect x="1299.5" y="140.5" width="29" height="8" fill="url(#gfr)" stroke="#2a4fa0" stroke-width="1.4"/><path d="M1309 141V148M1319 141V148" stroke="#2a4fa0" stroke-width="1.2"/><path d="M1336 152H1347L1341.5 158Z" fill="#000"/><path d="M1371 156Q1369 148 1377 147.5H1381" stroke="#9a9a9a" stroke-width="1.2" fill="none"/><path d="M1379 145L1382 147.5L1379 150" stroke="#9a9a9a" stroke-width="1.2" fill="none"/><path d="M1382 150Q1383 157 1374 158" stroke="#9a9a9a" stroke-width="1.2" fill="none"/><path d="M1376 155.5L1372.5 158L1376 160.5" stroke="#9a9a9a" stroke-width="1.2" fill="none"/><rect x="1387.5" y="141.5" width="5.5" height="13" fill="#fff" stroke="#9a9a9a" stroke-width="1"/><rect x="1388" y="142" width="4.5" height="5" fill="#bdbdbd"/><rect x="1368.5" y="160" width="13" height="6" fill="#fff" stroke="#9a9a9a" stroke-width="1"/><rect x="1369" y="160.5" width="6" height="5" fill="#bdbdbd"/><rect x="1406.5" y="141.5" width="5.5" height="4.5" fill="#c8c8c8" stroke="#a8a8a8" stroke-width="1"/><rect x="1413.5" y="141.5" width="17" height="4.5" fill="#c8c8c8" stroke="#a8a8a8" stroke-width="1"/><rect x="1406.5" y="149" width="5.5" height="19.5" fill="#c8c8c8" stroke="#a8a8a8" stroke-width="1"/><path d="M1415 166Q1423 165 1425 154" stroke="#9a9a9a" stroke-width="1.2" fill="none"/><path d="M1422 156L1425 152L1428 156Z" fill="#9a9a9a"/><rect x="1443.5" y="141.5" width="5.5" height="4.5" fill="#c8c8c8" stroke="#a8a8a8" stroke-width="1"/><rect x="1450.5" y="141.5" width="17" height="4.5" fill="#c8c8c8" stroke="#a8a8a8" stroke-width="1"/><rect x="1443.5" y="149" width="5.5" height="19.5" fill="#c8c8c8" stroke="#a8a8a8" stroke-width="1"/><path d="M1465 150Q1465 159 1454 160" stroke="#9a9a9a" stroke-width="1.2" fill="none"/><path d="M1456 157L1452 160L1456 163Z" fill="#9a9a9a"/><rect x="776" y="178" width="1" height="31" fill="#9a9a9a"/><rect x="821" y="178" width="1" height="31" fill="#9a9a9a"/><rect x="977" y="178" width="1" height="31" fill="#9a9a9a"/><rect x="1133" y="178" width="1" height="31" fill="#9a9a9a"/><rect x="1215" y="178" width="1" height="31" fill="#9a9a9a"/><rect x="1283" y="178" width="1" height="31" fill="#9a9a9a"/><rect x="1328" y="178" width="1" height="31" fill="#9a9a9a"/><rect x="1373" y="178" width="1" height="31" fill="#9a9a9a"/><rect x="1478" y="178" width="1" height="31" fill="#9a9a9a"/><path d="M409.5 189.5L414.5 194.5L419.5 189.5" stroke="#444" stroke-width="1.2" fill="none"/><path d="M444 189.5L448.5 193.5L444 198M449.5 189.5L454 193.5L449.5 198" stroke="#333" stroke-width="2.4" fill="none"/><path d="M678 189.5L683.5 195L689 189.5" stroke="#444" stroke-width="1.2" fill="none"/><path d="M724 196Q722 202 716 201Q709 199 710 192Q711 186 718 186" stroke="#9a9a9a" stroke-width="2.8" fill="none"/><path d="M716 182L722 186.5L716 191Z" fill="#9a9a9a"/><path d="M744 184L762 202M762 184L744 202" stroke="#9a9a9a" stroke-width="1.6"/><rect x="782.5" y="175.5" width="36" height="36" fill="#c9e5f9" stroke="#a3c6de" stroke-width="1"/><path d="M786 180.5H796M786 184.5H796M786 188.5H795" stroke="#c8c8b0" stroke-width="1.5"/><path d="M799 196L789.5 206" stroke="#a0522d" stroke-width="4.5" stroke-linecap="round"/><circle cx="806.5" cy="189" r="9" fill="url(#glens)" stroke="#8aa0b0" stroke-width="1.6"/><text x="833" y="203" font-family="Liberation Sans" font-size="24.5" font-weight="bold" fill="#111" textLength="27" lengthAdjust="spacingAndGlyphs">.+?</text><path d="M874 185.5L883 205" stroke="#111" stroke-width="2"/><text x="882" y="199.5" font-family="Liberation Sans" font-size="14" font-weight="bold" fill="#111" textLength="10" lengthAdjust="spacingAndGlyphs">n</text><path d="M911.5 186H908.5V202H911.5M926.5 186H929.5V202H926.5" stroke="#111" stroke-width="2" fill="none"/><path d="M919.5 194.5V198L918 201" stroke="#111" stroke-width="1.8" fill="none"/><path d="M942 190.5Q944 186.5 950 188Q957 190 961 189.5L968 189.5M942 200.5Q944 196.5 950 198Q957 200 961 199.5L968 199.5" stroke="#1020c0" stroke-width="2.2" fill="none"/><text x="986.5" y="204.7" font-family="Liberation Serif" font-size="26" fill="#a02830" textLength="22.5" lengthAdjust="spacingAndGlyphs">A</text><text x="1002.5" y="194.8" font-family="Liberation Sans" font-size="17.5" fill="#1a1a5a" textLength="10" lengthAdjust="spacingAndGlyphs">a</text><text x="1029.5" y="197.6" font-family="Liberation Sans" font-size="14" font-weight="bold" fill="#111" textLength="18" lengthAdjust="spacingAndGlyphs">w</text><path d="M1026 199V201.5H1032.5M1045 199V201.5H1051.5" stroke="#1f3fd0" stroke-width="2" fill="none"/><rect x="1064" y="191" width="23" height="4.8" fill="#2c4f8a"/><rect x="1077.2" y="180" width="2" height="2.5" fill="#111"/><path d="M1099 185.8H1117.3L1110.5 192V200.5H1105.5V192Z" fill="#4a8ad8" stroke="#3a78c8" stroke-width="0.8"/><path d="M1114 195L1123.5 205M1123.5 195L1114 205" stroke="#e82020" stroke-width="2.4"/><path d="M1147.75 180.75H1163.2L1167.95 185.5V207.75H1147.75Z" fill="url(#gdoc2)" stroke="#6c7fb8" stroke-width="1.5"/><path d="M1163.2 180.75V185.5H1167.95Z" fill="#7f9fd8" stroke="#6c7fb8" stroke-width="1"/><path d="M1151 191.6H1165.7M1151 196.1H1165.7M1151 201.2H1165.7" stroke="#b02030" stroke-width="2.6"/><path d="M1185.05 180.75H1200.2L1204.95 185.5V207.75H1185.05Z" fill="url(#gdoc2)" stroke="#6c7fb8" stroke-width="1.5"/><path d="M1200.2 180.75V185.5H1204.95Z" fill="#7f9fd8" stroke="#6c7fb8" stroke-width="1"/><path d="M1188 191.6H1202.5M1188 196.1H1202.5M1188 201.2H1202.5" stroke="#b4b8c0" stroke-width="2.6"/><path d="M1238.6 186V200" stroke="#1e88e5" stroke-width="1.8"/><path d="M1233 194.5L1238.6 200.5L1244.2 194.5" stroke="#1e88e5" stroke-width="1.8" fill="none"/><path d="M1261 191H1272L1266.5 197Z" fill="#000"/><rect x="1294.75" y="181.75" width="23.5" height="22.5" rx="1.5" fill="#ffffff" stroke="#2456a8" stroke-width="1.5"/><rect x="1294" y="181" width="25" height="3.5" rx="1.2" fill="#0f50c0"/><path d="M1300.5 191H1312.5L1308 195.5V200H1305V195.5Z" fill="#4a72c8"/><rect x="1334.5" y="175.5" width="36" height="36" fill="#c9e5f9" stroke="#a3c6de" stroke-width="1"/><path d="M1346 192V186Q1346 180 1352.8 180Q1359.6 180 1359.6 186V192" stroke="#c09a38" stroke-width="3.2" fill="none"/><rect x="1341.8" y="191" width="22.4" height="17" rx="1" fill="url(#ggold)" stroke="#a88428" stroke-width="0.8"/><path d="M1343 195H1363M1343 199H1363M1343 203H1363" stroke="#d8b450" stroke-width="0.8"/><circle cx="1352.8" cy="197.5" r="1.8" fill="#222"/><rect x="1352" y="197.5" width="1.6" height="4.5" fill="#222"/><path d="M1388 199L1393 182L1398 194" stroke="#6e6e6e" stroke-width="2.6" fill="none"/><path d="M1393 187H1401M1393 190H1404M1390 192.5H1405" stroke="#9a9a9a" stroke-width="1.2"/><path d="M1394 194H1407L1402.5 198.5V204H1399V198.5Z" fill="#8a8a8a"/><rect x="1423.5" y="185.5" width="11" height="17.5" fill="#ffffff" stroke="#909090" stroke-width="1"/><rect x="1423" y="185" width="12" height="4" fill="#8e8e8e"/><rect x="1425" y="191.5" width="8" height="3" fill="#a8b0bc"/><rect x="1425" y="196.5" width="8" height="3" fill="#a8b0bc"/><path d="M1429 191V200" stroke="#fff" stroke-width="1"/><path d="M1434.5 185Q1436 181 1440 181.5Q1442.5 182 1442.5 186V192" stroke="#6a6a6a" stroke-width="2.4" fill="none"/><path d="M1438.5 189L1442.5 194L1446.5 189" stroke="#6a6a6a" stroke-width="2.4" fill="none"/><path d="M1456 191H1467L1461.5 197Z" fill="#8a8a8a"/><path d="M1536 189.5L1541.5 195L1547 189.5" stroke="#444" stroke-width="1.2" fill="none"/><path d="M1567 182L1571.5 185.5L1567 189M1573.5 182L1578 185.5L1573.5 189" stroke="#6e6e8e" stroke-width="1.8" fill="none"/><g transform="translate(13,13) scale(1.0)"><path d="M2 23.5H27.5V4L24 1V25Z" fill="#8e8ea6"/><rect x="1.5" y="23" width="26" height="4.5" fill="#9a9ab4"/><rect x="0.7" y="0.7" width="23.5" height="23" fill="#fcfcff" stroke="#a4a8c8" stroke-width="1.4"/><path d="M3.5 6H14M3.5 9.5H13M3.5 13H12M3.5 16.5H11" stroke="#c0c8ec" stroke-width="1.1"/><path d="M12 22.5L22.5 1.5" stroke="#6a3a30" stroke-width="6"/><path d="M12.3 21.5L22.3 1.8" stroke="#f0cf78" stroke-width="3"/><path d="M19.8 6.5L23 0.5" stroke="#c84858" stroke-width="5.5"/><path d="M10.5 24L11.8 20.5L14 21.6Z" fill="#222"/></g><g transform="translate(10.5,218.5) scale(0.93)"><path d="M2 23.5H27.5V4L24 1V25Z" fill="#8e8ea6"/><rect x="1.5" y="23" width="26" height="4.5" fill="#9a9ab4"/><rect x="0.7" y="0.7" width="23.5" height="23" fill="#fcfcff" stroke="#a4a8c8" stroke-width="1.4"/><path d="M3.5 6H14M3.5 9.5H13M3.5 13H12M3.5 16.5H11" stroke="#c0c8ec" stroke-width="1.1"/><path d="M12 22.5L22.5 1.5" stroke="#6a3a30" stroke-width="6"/><path d="M12.3 21.5L22.3 1.8" stroke="#f0cf78" stroke-width="3"/><path d="M19.8 6.5L23 0.5" stroke="#c84858" stroke-width="5.5"/><path d="M10.5 24L11.8 20.5L14 21.6Z" fill="#222"/></g></svg>
</body></html>
